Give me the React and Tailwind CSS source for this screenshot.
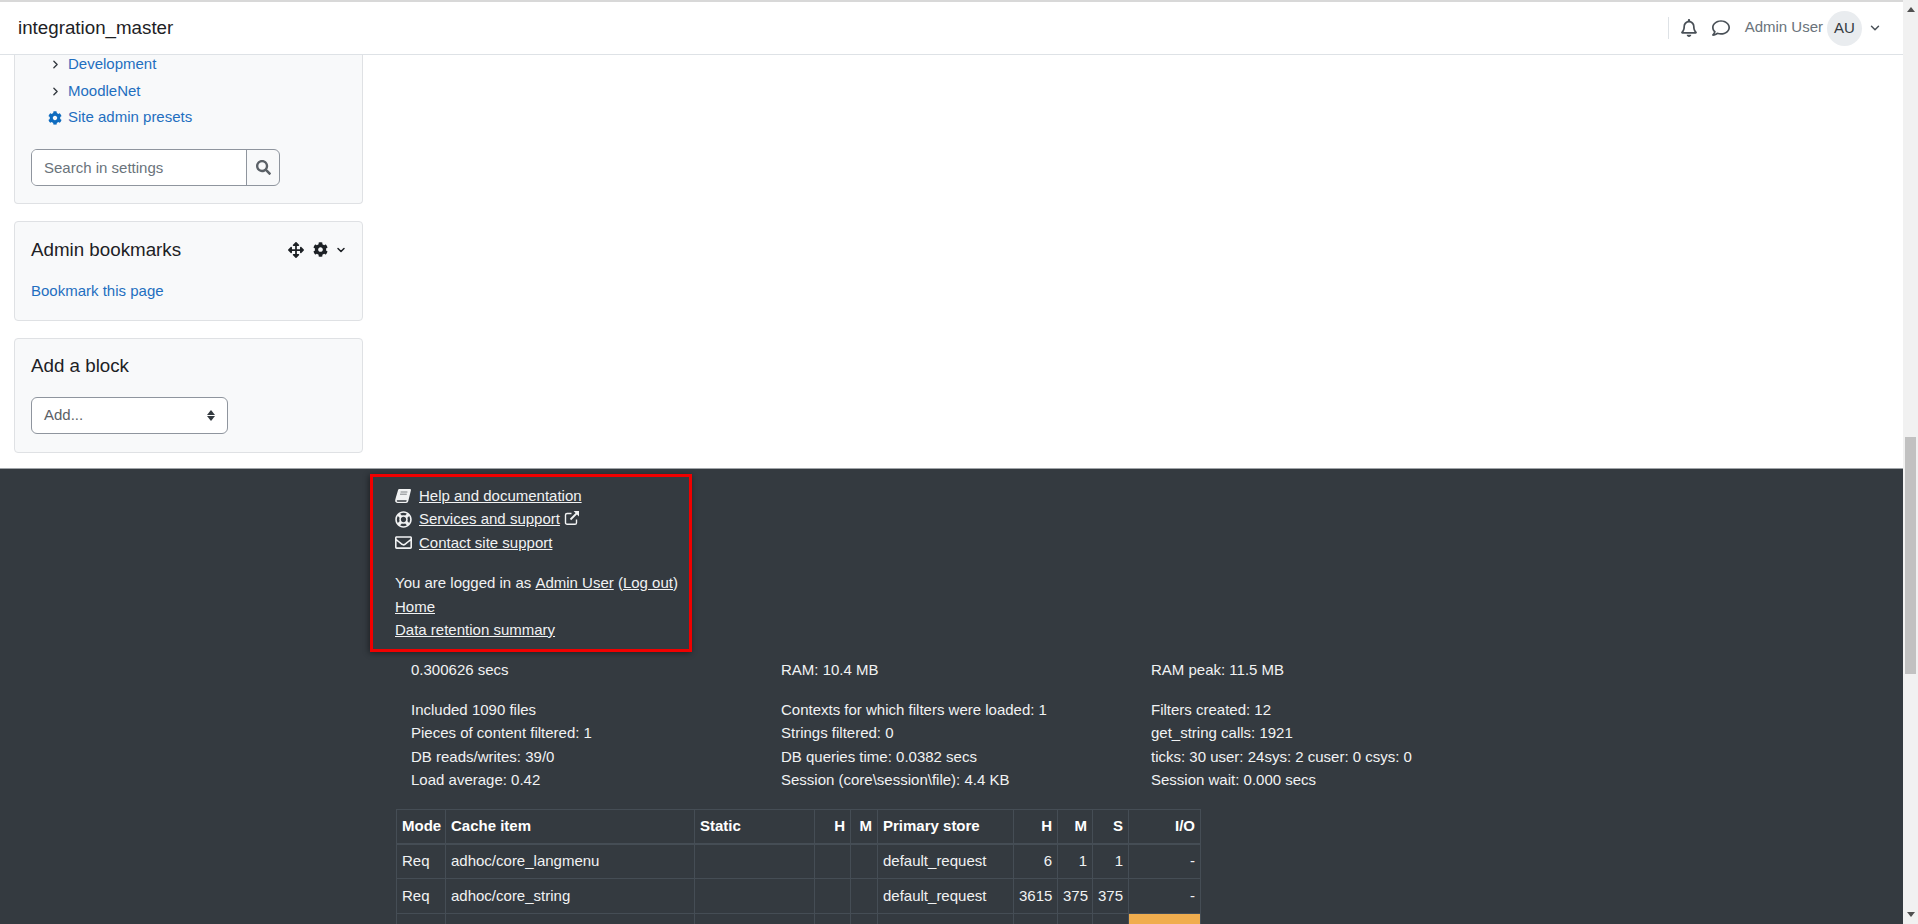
import { ChevronDown, ChevronRight } from 'lucide-react';
import { FaArrowsAlt, FaCog, FaRegBell, FaRegComment, FaRegEnvelope, FaRegLifeRing, FaSearch } from 'react-icons/fa';

const Card = ({ className, children }) => (
  <div className={`w-[349px] bg-[#f8f9fa] border border-[#dfe1e4] rounded-[4px] ${className}`}>{children}</div>
);

// slanted book, the one from Font Awesome 4
const BookIcon = () => (
  <svg viewBox="0 0 16 14" className="w-[16px] h-[14px]" fill="currentColor">
    <path d="M4.4 0h10.4c0.9 0 1.3 0.6 1.1 1.4L13.3 12c-0.3 1.2-1 2-2.2 2H2.6C1 14 0 12.9 0.2 11.4 0.3 10.4 0.8 8.6 1.3 7L3 1.3C3.2 0.5 3.7 0 4.4 0z" />
    <path d="M2.2 11.3h9.5l-0.5 1.4H2.6c-0.9 0-1.1-1.1-0.4-1.4z" fill="#343a40" />
    <path d="M5.6 3h6.8M5 5.2h6.8" stroke="#343a40" strokeWidth="0.6" />
  </svg>
);

const ExternalIcon = () => (
  <svg viewBox="0 0 16 16" className="w-[16px] h-[16px]" fill="none" stroke="currentColor" strokeWidth="1.4">
    <path d="M12.5 9.5v3.2c0 0.9-0.7 1.6-1.6 1.6H3.1c-0.9 0-1.6-0.7-1.6-1.6V5.1c0-0.9 0.7-1.6 1.6-1.6h4.4" />
    <path d="M6.5 9.5L14 2" strokeWidth="1.8" />
    <path d="M9.6 1h5.4v5.4z" fill="currentColor" stroke="none" />
  </svg>
);

const FooterLink = ({ icon, children }) => (
  <div className="flex items-center h-[23.5px]">
    <span className="w-[24px] flex items-center">{icon}</span>
    <a className="underline">{children}</a>
  </div>
);

const statColumns = [
  {
    top: '0.300626 secs',
    lines: ['Included 1090 files', 'Pieces of content filtered: 1', 'DB reads/writes: 39/0', 'Load average: 0.42'],
  },
  {
    top: 'RAM: 10.4 MB',
    lines: ['Contexts for which filters were loaded: 1', 'Strings filtered: 0', 'DB queries time: 0.0382 secs', 'Session (core\\session\\file): 4.4 KB'],
  },
  {
    top: 'RAM peak: 11.5 MB',
    lines: ['Filters created: 12', 'get_string calls: 1921', 'ticks: 30 user: 24sys: 2 cuser: 0 csys: 0', 'Session wait: 0.000 secs'],
  },
];

const colWidths = [49, 249, 120, 36, 27, 136, 44, 35, 36, 72];
const headers = ['Mode', 'Cache item', 'Static', 'H', 'M', 'Primary store', 'H', 'M', 'S', 'I/O'];
const rightCols = [3, 4, 6, 7, 8, 9];
const rows = [
  ['Req', 'adhoc/core_langmenu', '', '', '', 'default_request', '6', '1', '1', '-'],
  ['Req', 'adhoc/core_string', '', '', '', 'default_request', '3615', '375', '375', '-'],
  ['', '', '', '', '', '', '', '', '', ''],
];

const App = () => {
  return (
    <div className="w-[1918px] h-[924px] overflow-hidden flex bg-white font-['Liberation_Sans',sans-serif] text-[15px] text-[#1d2125]">
      <div className="w-[1903px] h-full flex flex-col overflow-hidden border-t-2 border-[#d8d8d8]">
        {/* Navbar */}
        <header className="h-[53px] shrink-0 bg-white border-b border-[#dee2e6] flex items-center pl-[18px]">
          <span className="text-[18.75px] leading-none">integration_master</span>
          <div className="ml-auto flex items-center text-[#495057]">
            <div className="w-px h-[22px] bg-[#dee2e6] mr-[11px]" />
            <FaRegBell size={18} className="mr-[14px]" />
            <FaRegComment size={18} className="mr-[15px]" />
            <span className="text-[#6a737b] -mt-[2px]">Admin User</span>
            <span className="ml-[4px] w-[35px] h-[35px] rounded-full bg-[#e9ecef] flex items-center justify-center text-[#343a40]">AU</span>
            <ChevronDown size={14} strokeWidth={2.5} className="ml-[6px] mr-[21px]" />
          </div>
        </header>

        {/* Blocks */}
        <main className="h-[413px] shrink-0 px-[14px] flex flex-col gap-[17px]">
          <Card className="h-[149px] shrink-0 border-t-0 rounded-t-none pl-[16px]">
            <div className="text-[#0f6cbf]">
              <div className="h-[28px] flex items-center pl-[18px] -mt-[5px]">
                <ChevronRight size={13} strokeWidth={2.5} className="text-[#343a40] mr-[6px]" />
                <a className="text-[#1f6fc0]">Development</a>
              </div>
              <div className="h-[27px] flex items-center pl-[18px]">
                <ChevronRight size={13} strokeWidth={2.5} className="text-[#343a40] mr-[6px]" />
                <a className="text-[#1f6fc0]">MoodleNet</a>
              </div>
              <div className="h-[25px] flex items-center pl-[17px]">
                <FaCog size={14} className="mr-[6px]" />
                <a className="text-[#1f6fc0]">Site admin presets</a>
              </div>
            </div>
            <div className="mt-[19px] w-[249px] h-[37px] flex rounded-[6px] border border-[#8f959e] overflow-hidden">
              <div className="flex-1 bg-white flex items-center pl-[12px] pt-px text-[#6a737b]">Search in settings</div>
              <div className="w-[33px] border-l border-[#8f959e] flex items-center justify-center text-[#5b6167]">
                <FaSearch size={15} />
              </div>
            </div>
          </Card>

          <Card className="h-[99.5px] shrink-0 px-[16px] pt-[16px]">
            <div className="flex items-center h-[25px]">
              <span className="text-[18.75px]">Admin bookmarks</span>
              <div className="ml-auto flex items-center -mt-[2px]">
                <FaArrowsAlt size={16} className="mr-[9px]" />
                <FaCog size={15} className="mr-[7px]" />
                <ChevronDown size={12} strokeWidth={3} className="mr-[-1px]" />
              </div>
            </div>
            <a className="block mt-[17px] text-[#1f6fc0]">Bookmark this page</a>
          </Card>

          <Card className="h-[115px] shrink-0 px-[16px] pt-[15px]">
            <div className="h-[25px] flex items-center text-[18.75px]">Add a block</div>
            <div className="mt-[18px] w-[197px] h-[37px] bg-white rounded-[6px] border border-[#8f959e] flex items-center pl-[12px] pr-[12px] text-[#5b6167]">
              Add...
              <div className="ml-auto flex flex-col items-center text-[#343a40]">
                <svg viewBox="0 0 8 5" className="w-[8px] h-[5px]" fill="currentColor"><path d="M4 0l4 5H0z" /></svg>
                <svg viewBox="0 0 8 5" className="w-[8px] h-[5px] mt-[1px]" fill="currentColor"><path d="M4 5L0 0h8z" /></svg>
              </div>
            </div>
          </Card>
        </main>

        {/* Footer */}
        <footer className="flex-1 bg-[#343a40] border-t border-[#a0a4a8] text-[#f1f2f3] pl-[372px] overflow-hidden">
          <div className="w-[322px] h-[178px] mt-[5px] -ml-[2px] border-[3px] border-[#f00000] shadow-[-1px_1px_6px_rgba(0,0,0,0.45)] pl-[22px] pt-[7px]">
            <FooterLink icon={<BookIcon />}>Help and documentation</FooterLink>
            <div className="flex items-center h-[23.5px]">
              <span className="w-[24px] flex items-center"><FaRegLifeRing size={17} /></span>
              <a className="underline">Services and support</a>
              <span className="ml-[4px] -mt-[3px]"><ExternalIcon /></span>
            </div>
            <FooterLink icon={<FaRegEnvelope size={17} />}>Contact site support</FooterLink>
            <div className="mt-[17px] h-[23.5px] flex items-center whitespace-pre">
              You are logged in as <a className="underline">Admin User</a> (<a className="underline">Log out</a>)
            </div>
            <div className="h-[23.5px] flex items-center"><a className="underline">Home</a></div>
            <div className="h-[23.5px] flex items-center"><a className="underline">Data retention summary</a></div>
          </div>

          <div className="flex mt-[6px] ml-[39px]">
            {statColumns.map((col) => (
              <div key={col.top} className="w-[370px] shrink-0 leading-[23.5px]">
                <div className="mb-[16px]">{col.top}</div>
                {col.lines.map((line) => (
                  <div key={line}>{line}</div>
                ))}
              </div>
            ))}
          </div>

          <table className="mt-[17px] ml-[24px] border-collapse table-fixed w-[805px]">
            <colgroup>
              {colWidths.map((w, i) => (
                <col key={i} style={{ width: w }} />
              ))}
            </colgroup>
            <thead>
              <tr className="h-[35px]">
                {headers.map((h, i) => (
                  <th key={i} className={`border border-b-2 border-[#454d55] px-[5px] font-bold text-white whitespace-nowrap ${rightCols.includes(i) ? 'text-right' : 'text-left'}`}>{h}</th>
                ))}
              </tr>
            </thead>
            <tbody>
              {rows.map((row, r) => (
                <tr key={r} className="h-[34.5px]">
                  {row.map((cell, i) => (
                    <td key={i} className={`border border-[#454d55] px-[5px] whitespace-nowrap ${rightCols.includes(i) ? 'text-right' : 'text-left'} ${r === 2 && i === 9 ? 'bg-[#f0ad4e]' : ''}`}>{cell}</td>
                  ))}
                </tr>
              ))}
            </tbody>
          </table>
        </footer>
      </div>

      {/* Scrollbar */}
      <div className="w-[15px] h-full bg-[#f1f1f1] flex flex-col items-center relative">
        <svg viewBox="0 0 8 5" className="w-[8px] h-[5px] mt-[7px] text-[#505050]" fill="currentColor"><path d="M4 0l4 5H0z" /></svg>
        <div className="absolute left-[2px] top-[437px] w-[11px] h-[237px] bg-[#c1c1c1]" />
        <svg viewBox="0 0 8 5" className="w-[8px] h-[5px] mt-auto mb-[7px] text-[#505050]" fill="currentColor"><path d="M4 5L0 0h8z" /></svg>
      </div>
    </div>
  );
};

export default App;
